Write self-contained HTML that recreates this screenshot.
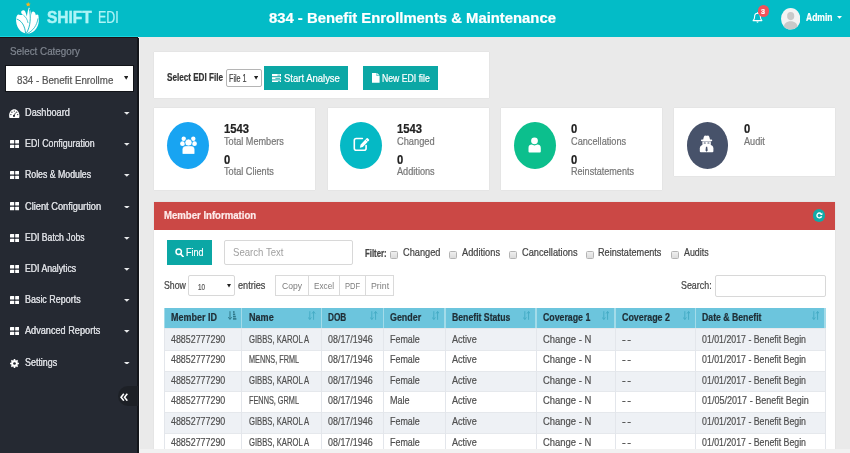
<!DOCTYPE html>
<html><head><meta charset="utf-8"><title>834 - Benefit Enrollments &amp; Maintenance</title>
<style>
html,body{margin:0;padding:0}
body{width:850px;height:453px;overflow:hidden;position:relative;background:#eaeaea;font-family:"Liberation Sans",sans-serif}
.a{position:absolute;box-sizing:border-box}
.t{position:absolute;white-space:nowrap;line-height:1;transform-origin:0 0;-webkit-text-stroke:0.22px;font-family:"Liberation Sans",sans-serif}
.card{position:absolute;background:#fff;box-shadow:0 0 1px rgba(0,0,0,.12)}
.circ{position:absolute;border-radius:50%}
.btn{position:absolute;background:#0ba7a5}
.th{position:absolute;top:308px;height:20px;background:#6cc5dd;border-right:1px solid #8fd3e6}
.cb{position:absolute;width:7.8px;height:8px;top:250.7px;border:1px solid #b4b4b4;border-radius:1.5px;background:linear-gradient(#efefef,#dcdcdc);box-sizing:border-box}
.dtb{position:absolute;top:275.4px;height:21px;border:1px solid #dadada;background:#fff;box-sizing:border-box}
</style></head><body>
<!-- header -->
<div class="a" style="left:0;top:0;width:850px;height:37.3px;background:#03bcc7"></div>
<div class="a" style="left:0;top:36.4px;width:138px;height:1px;background:#19d3dc"></div>
<!-- sidebar -->
<div class="a" style="left:0;top:37.4px;width:138.4px;height:416px;background:#252932"></div>
<div class="a" style="left:0;top:37.4px;width:138.4px;height:1px;background:#1b1114"></div>
<div class="a" style="left:137.4px;top:37.5px;width:1.6px;height:416px;background:#14161b"></div>
<div class="a" style="left:139px;top:37.5px;width:1.2px;height:416px;background:#f4f4f4"></div>
<!-- logo -->
<svg class="a" style="left:14px;top:1px" width="28" height="35" viewBox="0 0 28 35">
  <path d="M14.2 0.9 l0.75 1.55 1.7 0.25 -1.25 1.2 0.3 1.7 -1.5 -0.8 -1.5 0.8 0.3 -1.7 -1.25 -1.2 1.7 -0.25z" fill="#f7b21e"/>
  <path d="M2.1 17.6 A11.4 13.6 0 1 0 24.7 17 L24.3 14 C23.6 13 22.4 13.3 21.8 14.2 C21.6 12.6 21.2 12 20.6 11.2 A2.1 2.1 0 0 0 17.6 11.4 C17.2 12.4 17.3 13.6 17.5 15 C17 11.6 16.2 8.6 15 6.3 C14.1 8.6 13.3 11.6 12.9 15.4 C12.3 13.8 12 12 11.2 10.4 A2.2 2.2 0 0 0 7.2 10.6 C6.9 12 7.8 13.2 9 13.9 C7.2 14.4 5.8 13.6 4.6 13.4 C3.2 13.6 2.4 15 2.1 17.6z" fill="#fff"/>
  <path d="M2.6 18 C7.5 19.6 11 24.6 11.6 32.6" stroke="#0fb6c1" stroke-width="0.9" fill="none"/>
  <path d="M15.3 8 C17 15.5 16.8 25.6 12 32.8" stroke="#0fb6c1" stroke-width="0.9" fill="none"/>
  <path d="M24 17.4 C23 24.4 19 30 12.8 32.8" stroke="#0fb6c1" stroke-width="0.8" fill="none"/>
  <path d="M9.4 14.2 C11.6 15.6 13.4 18.4 14 22" stroke="#0fb6c1" stroke-width="0.7" fill="none"/>
</svg>
<!-- bell -->
<svg class="a" style="left:752px;top:12px" width="11" height="12" viewBox="0 0 11 12">
  <path d="M5.5 1.3 C3.4 1.3 2.6 3 2.6 4.8 C2.6 7 1.9 7.9 1.1 8.6 L9.9 8.6 C9.1 7.9 8.4 7 8.4 4.8 C8.4 3 7.6 1.3 5.5 1.3z" fill="none" stroke="#fff" stroke-width="1.1" stroke-linejoin="round"/>
  <path d="M4.4 9.6 a1.1 1.1 0 0 0 2.2 0z" fill="#fff"/>
  <rect x="5" y="0.3" width="1" height="1.2" fill="#fff"/>
</svg>
<div class="circ" style="left:757.5px;top:5px;width:11.6px;height:11.6px;background:#f0535b"></div>
<!-- avatar -->
<svg class="a" style="left:780.5px;top:8px" width="19.4" height="21.6" viewBox="0 0 20 22" preserveAspectRatio="none">
  <defs><clipPath id="av"><ellipse cx="10" cy="11" rx="10" ry="11"/></clipPath></defs>
  <ellipse cx="10" cy="11" rx="10" ry="11" fill="#f3f3f3"/>
  <g clip-path="url(#av)" fill="#c9c9c9"><ellipse cx="10" cy="8.2" rx="3.7" ry="4.2"/><path d="M2.5 22 C2.5 15.5 6 13.6 10 13.6 C14 13.6 17.5 15.5 17.5 22z"/></g>
</svg>
<svg class="a" style="left:836.5px;top:16.4px" width="5" height="3" viewBox="0 0 5 3"><path d="M0 0h5l-2.5 2.8z" fill="#fff"/></svg>
<!-- sidebar select -->
<div class="a" style="left:6px;top:65.8px;width:126.6px;height:24.8px;background:#fff;box-shadow:0 0 0 1px #121419"></div>
<svg class="a" style="left:123.8px;top:76.2px" width="4.4" height="3.8" viewBox="0 0 4.4 3.8"><path d="M0 0h4.4l-2.2 3.8z" fill="#222"/></svg>
<svg class="a" style="left:9.2px;top:108.5px" width="10.6" height="9.6" viewBox="0 0 10.6 9.6">
<path d="M0.3 8.2 C-0.6 3.6 2.3 0.3 5.3 0.3 C8.3 0.3 11.2 3.6 10.3 8.2 C10.2 8.9 9.8 9.3 9.2 9.3 H1.4 C0.8 9.3 0.4 8.9 0.3 8.2z" fill="#fff"/>
<g fill="#252932"><circle cx="5.3" cy="2.1" r="0.65"/><circle cx="2.9" cy="3.2" r="0.65"/><circle cx="7.7" cy="3.2" r="0.65"/><circle cx="1.9" cy="5.6" r="0.65"/><circle cx="8.7" cy="5.6" r="0.65"/><circle cx="5" cy="6.9" r="1.05"/></g>
<path d="M5 6.9 L6.6 3.6" stroke="#252932" stroke-width="0.8"/></svg>
<svg class="a" style="left:9.6px;top:139.9px" width="9.4" height="8.3" viewBox="0 0 9.4 8.3"><g fill="#fff"><rect x="0" y="0" width="4.2" height="3.6" rx="0.5"/><rect x="5.2" y="0" width="4.2" height="3.6" rx="0.5"/><rect x="0" y="4.7" width="4.2" height="3.6" rx="0.5"/><rect x="5.2" y="4.7" width="4.2" height="3.6" rx="0.5"/></g></svg>
<svg class="a" style="left:9.6px;top:171.1px" width="9.4" height="8.3" viewBox="0 0 9.4 8.3"><g fill="#fff"><rect x="0" y="0" width="4.2" height="3.6" rx="0.5"/><rect x="5.2" y="0" width="4.2" height="3.6" rx="0.5"/><rect x="0" y="4.7" width="4.2" height="3.6" rx="0.5"/><rect x="5.2" y="4.7" width="4.2" height="3.6" rx="0.5"/></g></svg>
<svg class="a" style="left:9.6px;top:202.3px" width="9.4" height="8.3" viewBox="0 0 9.4 8.3"><g fill="#fff"><rect x="0" y="0" width="4.2" height="3.6" rx="0.5"/><rect x="5.2" y="0" width="4.2" height="3.6" rx="0.5"/><rect x="0" y="4.7" width="4.2" height="3.6" rx="0.5"/><rect x="5.2" y="4.7" width="4.2" height="3.6" rx="0.5"/></g></svg>
<svg class="a" style="left:9.6px;top:233.5px" width="9.4" height="8.3" viewBox="0 0 9.4 8.3"><g fill="#fff"><rect x="0" y="0" width="4.2" height="3.6" rx="0.5"/><rect x="5.2" y="0" width="4.2" height="3.6" rx="0.5"/><rect x="0" y="4.7" width="4.2" height="3.6" rx="0.5"/><rect x="5.2" y="4.7" width="4.2" height="3.6" rx="0.5"/></g></svg>
<svg class="a" style="left:9.6px;top:264.7px" width="9.4" height="8.3" viewBox="0 0 9.4 8.3"><g fill="#fff"><rect x="0" y="0" width="4.2" height="3.6" rx="0.5"/><rect x="5.2" y="0" width="4.2" height="3.6" rx="0.5"/><rect x="0" y="4.7" width="4.2" height="3.6" rx="0.5"/><rect x="5.2" y="4.7" width="4.2" height="3.6" rx="0.5"/></g></svg>
<svg class="a" style="left:9.6px;top:295.9px" width="9.4" height="8.3" viewBox="0 0 9.4 8.3"><g fill="#fff"><rect x="0" y="0" width="4.2" height="3.6" rx="0.5"/><rect x="5.2" y="0" width="4.2" height="3.6" rx="0.5"/><rect x="0" y="4.7" width="4.2" height="3.6" rx="0.5"/><rect x="5.2" y="4.7" width="4.2" height="3.6" rx="0.5"/></g></svg>
<svg class="a" style="left:9.6px;top:327.1px" width="9.4" height="8.3" viewBox="0 0 9.4 8.3"><g fill="#fff"><rect x="0" y="0" width="4.2" height="3.6" rx="0.5"/><rect x="5.2" y="0" width="4.2" height="3.6" rx="0.5"/><rect x="0" y="4.7" width="4.2" height="3.6" rx="0.5"/><rect x="5.2" y="4.7" width="4.2" height="3.6" rx="0.5"/></g></svg>
<svg class="a" style="left:9.6px;top:358.9px" width="9" height="9" viewBox="0 0 9 9"><path d="M8.94 3.74 L8.94 5.26 L7.79 5.34 L7.42 6.23 L8.17 7.10 L7.10 8.17 L6.23 7.42 L5.34 7.79 L5.26 8.94 L3.74 8.94 L3.66 7.79 L2.77 7.42 L1.90 8.17 L0.83 7.10 L1.58 6.23 L1.21 5.34 L0.06 5.26 L0.06 3.74 L1.21 3.66 L1.58 2.77 L0.83 1.90 L1.90 0.83 L2.77 1.58 L3.66 1.21 L3.74 0.06 L5.26 0.06 L5.34 1.21 L6.23 1.58 L7.10 0.83 L8.17 1.90 L7.42 2.77 L7.79 3.66z" fill="#fff"/><circle cx="4.5" cy="4.5" r="1.35" fill="#252932"/></svg>
<svg class="a" style="left:124px;top:112.0px" width="5.6" height="2.8" viewBox="0 0 5.6 2.8"><path d="M0 0h5.6l-2.8 2.8z" fill="#e8e9eb"/></svg>
<svg class="a" style="left:124px;top:143.2px" width="5.6" height="2.8" viewBox="0 0 5.6 2.8"><path d="M0 0h5.6l-2.8 2.8z" fill="#e8e9eb"/></svg>
<svg class="a" style="left:124px;top:174.4px" width="5.6" height="2.8" viewBox="0 0 5.6 2.8"><path d="M0 0h5.6l-2.8 2.8z" fill="#e8e9eb"/></svg>
<svg class="a" style="left:124px;top:205.6px" width="5.6" height="2.8" viewBox="0 0 5.6 2.8"><path d="M0 0h5.6l-2.8 2.8z" fill="#e8e9eb"/></svg>
<svg class="a" style="left:124px;top:236.8px" width="5.6" height="2.8" viewBox="0 0 5.6 2.8"><path d="M0 0h5.6l-2.8 2.8z" fill="#e8e9eb"/></svg>
<svg class="a" style="left:124px;top:268.0px" width="5.6" height="2.8" viewBox="0 0 5.6 2.8"><path d="M0 0h5.6l-2.8 2.8z" fill="#e8e9eb"/></svg>
<svg class="a" style="left:124px;top:299.2px" width="5.6" height="2.8" viewBox="0 0 5.6 2.8"><path d="M0 0h5.6l-2.8 2.8z" fill="#e8e9eb"/></svg>
<svg class="a" style="left:124px;top:330.4px" width="5.6" height="2.8" viewBox="0 0 5.6 2.8"><path d="M0 0h5.6l-2.8 2.8z" fill="#e8e9eb"/></svg>
<svg class="a" style="left:124px;top:361.6px" width="5.6" height="2.8" viewBox="0 0 5.6 2.8"><path d="M0 0h5.6l-2.8 2.8z" fill="#e8e9eb"/></svg>
<!-- collapse tab -->
<div class="a" style="left:117.7px;top:386px;width:20px;height:20.4px;background:#1d2026;border-radius:10px 0 0 10px"></div>
<svg class="a" style="left:120.2px;top:392.7px" width="8.2" height="8.4" viewBox="0 0 9.4 9.6"><path d="M4.4 0.8 L1.2 4.8 L4.4 8.8 M8.4 0.8 L5.2 4.8 L8.4 8.8" stroke="#fff" stroke-width="1.8" fill="none"/></svg>

<!-- toolbar panel -->
<div class="card" style="left:154px;top:52px;width:335.4px;height:45.5px"></div>
<div class="a" style="left:225.8px;top:69.4px;width:36px;height:18px;background:#fff;border:1px solid #b5b5b5;border-radius:2px"></div>
<svg class="a" style="left:253.6px;top:76.4px" width="4.2" height="3.8" viewBox="0 0 4.2 3.8"><path d="M0 0h4.2l-2.1 3.8z" fill="#222"/></svg>
<div class="btn" style="left:264.4px;top:66.2px;width:83.6px;height:23.7px"></div>
<div class="btn" style="left:363.4px;top:66.2px;width:74.6px;height:23.7px"></div>
<svg class="a" style="left:272px;top:73.6px" width="9.2" height="8.6" viewBox="0 0 9.2 8.6"><g fill="#fff"><rect x="0" y="0" width="9.2" height="2.2"/><rect x="0" y="3.2" width="9.2" height="2.2"/><rect x="0" y="6.4" width="9.2" height="2.2"/></g><g fill="#0ba7a5"><rect x="5.4" y="0.7" width="2.6" height="0.8"/><rect x="3.4" y="3.9" width="4.6" height="0.8"/><rect x="6" y="7.1" width="2" height="0.8"/></g></svg>
<svg class="a" style="left:372px;top:72.8px" width="7.6" height="9.8" viewBox="0 0 7.6 9.8"><path d="M0 0H4.6V3H7.6V9.8H0z M5.2 0 L7.6 2.4 H5.2z" fill="#fff"/></svg>

<!-- cards -->
<div class="card" style="left:154px;top:108px;width:161px;height:82.3px"></div>
<div class="card" style="left:328px;top:108px;width:161px;height:82.3px"></div>
<div class="card" style="left:501px;top:108px;width:161px;height:82.3px"></div>
<div class="card" style="left:674px;top:108px;width:161px;height:68.4px"></div>
<div class="circ" style="left:167px;top:122.2px;width:42px;height:47px;background:#18a4f2"></div>
<div class="circ" style="left:340.3px;top:122.2px;width:41.8px;height:47px;background:#05b9c5"></div>
<div class="circ" style="left:514px;top:122.2px;width:41.8px;height:47px;background:#0cbf8d"></div>
<div class="circ" style="left:686.8px;top:121.8px;width:41.6px;height:47px;background:#47526a"></div>
<svg class="a" style="left:179.6px;top:135.6px" width="17" height="18.4" viewBox="0 0 17 18.4">
<g fill="#fff"><circle cx="3.7" cy="2.8" r="2.2"/><circle cx="13.3" cy="2.8" r="2.2"/><circle cx="2.5" cy="7.7" r="2.4"/><circle cx="14.5" cy="7.7" r="2.4"/>
<circle cx="8.5" cy="6.6" r="3.6" stroke="#18a4f2" stroke-width="0.7"/>
<path d="M2.3 17.2 V13.4 C2.3 11 4 9.9 5.8 9.9 H11.2 C13 9.9 14.7 11 14.7 13.4 V17.2 Q14.7 18.2 13.7 18.2 H3.3 Q2.3 18.2 2.3 17.2z" stroke="#18a4f2" stroke-width="0.4"/></g></svg>
<svg class="a" style="left:352.6px;top:137px" width="17" height="15" viewBox="0 0 17 15">
<path d="M9.4 1.5 H3.2 C1.9 1.5 1.3 2.3 1.3 3.4 V11.2 C1.3 12.5 2 13.2 3.2 13.2 H11.2 C12.4 13.2 13.1 12.5 13.1 11.2 V8.6" stroke="#fff" stroke-width="1.6" fill="none" stroke-linecap="round"/>
<path d="M6.9 10.8 L7.5 7.8 L13.6 1.2 Q14.2 0.7 14.8 1.2 L16 2.4 Q16.5 3 16 3.6 L9.8 10.1z" fill="#fff"/><path d="M12.6 2.6 L14.6 4.6" stroke="#05b9c5" stroke-width="0.6"/></svg>
<svg class="a" style="left:527.8px;top:137px" width="13.4" height="15.8" viewBox="0 0 13.4 15.8">
<g fill="#fff"><circle cx="6.5" cy="3.8" r="3.4"/><path d="M0.5 14.4 V11 C0.5 8.6 2 7.6 3.6 7.6 L6.5 8.6 L9.5 7.6 C11.2 7.6 12.8 8.6 12.8 11 V14.4 Q12.8 15.4 11.8 15.4 H1.5 Q0.5 15.4 0.5 14.4z"/></g></svg>
<svg class="a" style="left:699px;top:135.3px" width="15.2" height="17.6" viewBox="0 0 15.2 17.6">
<g fill="#fff"><path d="M4.2 5 C4.4 2.2 5.2 0.4 6.3 0.4 C6.8 0.4 7.2 0.8 7.6 0.8 C8 0.8 8.4 0.4 8.9 0.4 C10 0.4 10.8 2.2 11 5z"/>
<rect x="2" y="4.5" width="11.2" height="1.7" rx="0.8"/>
<path d="M3.4 6.6 H11.8 V9.4 C11.8 10.4 11.2 11 10.4 11 H4.8 C4 11 3.4 10.4 3.4 9.4z"/>
<path d="M0.8 16.3 V13.4 C0.8 11 2.6 9.8 4.6 9.8 H10.6 C12.6 9.8 14.4 11 14.4 13.4 V16.3 Q14.4 17.3 13.4 17.3 H1.8 Q0.8 17.3 0.8 16.3z"/></g>
<g fill="#47526a"><rect x="4.7" y="7.5" width="2.1" height="1" rx="0.5"/><rect x="8.4" y="7.5" width="2.1" height="1" rx="0.5"/><path d="M7 11.8 H8.2 L8.7 15.6 L7.6 16.8 L6.5 15.6z"/></g></svg>

<!-- member panel -->
<div class="card" style="left:154px;top:201.5px;width:681px;height:252px"></div>
<div class="a" style="left:154px;top:201.5px;width:681px;height:28.2px;background:#cb4845"></div>
<div class="circ" style="left:812.8px;top:209.4px;width:12.6px;height:12.6px;background:#12aaa6"></div>
<svg class="a" style="left:815.6px;top:212.2px" width="7" height="7" viewBox="0 0 7 7"><path d="M5.6 4.3 A2.4 2.4 0 1 1 5.2 1.9" stroke="#fff" stroke-width="1.4" fill="none"/><path d="M6.4 0.6 V3 H4z" fill="#fff"/></svg>
<div class="btn" style="left:167.2px;top:240.4px;width:44.7px;height:24.2px"></div>
<svg class="a" style="left:175px;top:247.8px" width="9" height="9.6" viewBox="0 0 9 9.6"><circle cx="3.7" cy="3.8" r="2.7" stroke="#fff" stroke-width="1.5" fill="none"/><path d="M5.7 6 L8.2 8.8" stroke="#fff" stroke-width="1.7" stroke-linecap="round"/></svg>
<div class="a" style="left:224.3px;top:240.3px;width:128.4px;height:24.3px;background:#fff;border:1px solid #d8d8d8;border-radius:2px"></div>
<div class="cb" style="left:390px"></div><div class="cb" style="left:449.2px"></div><div class="cb" style="left:509px"></div><div class="cb" style="left:586.2px"></div><div class="cb" style="left:671.4px"></div>
<div class="a" style="left:188px;top:275.4px;width:47px;height:21px;background:#fff;border:1px solid #d8d8d8;border-radius:2px"></div>
<svg class="a" style="left:227.4px;top:284.2px" width="4" height="3.6" viewBox="0 0 4 3.6"><path d="M0 0h4l-2 3.6z" fill="#222"/></svg>
<div class="dtb" style="left:275px;width:33.6px"></div><div class="dtb" style="left:307.8px;width:32px"></div><div class="dtb" style="left:339px;width:27px"></div><div class="dtb" style="left:365.2px;width:29.2px"></div>
<div class="a" style="left:715.4px;top:275.2px;width:110.4px;height:21.4px;background:#fff;border:1px solid #d8d8d8;border-radius:2px"></div>
<div class="a" style="left:164.4px;top:308px;width:660.6px;height:20px;background:#6cc5dd"></div>
<div class="a" style="left:164.4px;top:328px;width:660.6px;height:22.2px;background:#eef1f5;border-top:1px solid #e5e8ec"></div>
<div class="a" style="left:164.4px;top:350.2px;width:660.6px;height:20.6px;background:#ffffff;border-top:1px solid #e5e8ec"></div>
<div class="a" style="left:164.4px;top:370.8px;width:660.6px;height:20.6px;background:#eef1f5;border-top:1px solid #e5e8ec"></div>
<div class="a" style="left:164.4px;top:391.4px;width:660.6px;height:20.6px;background:#ffffff;border-top:1px solid #e5e8ec"></div>
<div class="a" style="left:164.4px;top:412.0px;width:660.6px;height:20.7px;background:#eef1f5;border-top:1px solid #e5e8ec"></div>
<div class="a" style="left:164.4px;top:432.7px;width:660.6px;height:20.6px;background:#ffffff;border-top:1px solid #e5e8ec"></div>
<div class="a" style="left:163.7px;top:308px;width:1.4px;height:20px;background:#a3dbe9"></div>
<div class="a" style="left:163.9px;top:328px;width:1px;height:125px;background:#e3e6eb"></div>
<div class="a" style="left:241.0px;top:308px;width:1.4px;height:20px;background:#a3dbe9"></div>
<div class="a" style="left:241.2px;top:328px;width:1px;height:125px;background:#e3e6eb"></div>
<div class="a" style="left:320.7px;top:308px;width:1.4px;height:20px;background:#a3dbe9"></div>
<div class="a" style="left:320.9px;top:328px;width:1px;height:125px;background:#e3e6eb"></div>
<div class="a" style="left:382.6px;top:308px;width:1.4px;height:20px;background:#a3dbe9"></div>
<div class="a" style="left:382.8px;top:328px;width:1px;height:125px;background:#e3e6eb"></div>
<div class="a" style="left:444.3px;top:308px;width:1.4px;height:20px;background:#a3dbe9"></div>
<div class="a" style="left:444.5px;top:328px;width:1px;height:125px;background:#e3e6eb"></div>
<div class="a" style="left:535.3px;top:308px;width:1.4px;height:20px;background:#a3dbe9"></div>
<div class="a" style="left:535.5px;top:328px;width:1px;height:125px;background:#e3e6eb"></div>
<div class="a" style="left:614.3px;top:308px;width:1.4px;height:20px;background:#a3dbe9"></div>
<div class="a" style="left:614.5px;top:328px;width:1px;height:125px;background:#e3e6eb"></div>
<div class="a" style="left:694.9px;top:308px;width:1.4px;height:20px;background:#a3dbe9"></div>
<div class="a" style="left:695.1px;top:328px;width:1px;height:125px;background:#e3e6eb"></div>
<div class="a" style="left:824.3px;top:308px;width:1.4px;height:20px;background:#a3dbe9"></div>
<div class="a" style="left:824.5px;top:328px;width:1px;height:125px;background:#e3e6eb"></div>
<svg class="a" style="left:228.3px;top:311.4px" width="8.4" height="8.8" viewBox="0 0 8.4 8.8"><path d="M2 0.2 V8.2 M0.3 6.2 L2 8.4 L3.7 6.2" stroke="#2f7788" stroke-width="1" fill="none"/><g fill="#2f7788"><rect x="5" y="0.2" width="1.6" height="1.6"/><rect x="5" y="2.5" width="2.2" height="1.6"/><rect x="5" y="4.8" width="2.8" height="1.6"/><rect x="5" y="7.1" width="3.4" height="1.6"/></g></svg>
<svg class="a" style="left:308.4px;top:311.4px" width="7.4" height="9" viewBox="0 0 7.4 9"><path d="M1.8 0.2 V8.2 M0.2 6.4 L1.8 8.6 L3.4 6.4 M5.6 8.8 V0.8 M4 2.6 L5.6 0.4 L7.2 2.6" stroke="#45adc6" stroke-width="1" fill="none"/></svg>
<svg class="a" style="left:370.3px;top:311.4px" width="7.4" height="9" viewBox="0 0 7.4 9"><path d="M1.8 0.2 V8.2 M0.2 6.4 L1.8 8.6 L3.4 6.4 M5.6 8.8 V0.8 M4 2.6 L5.6 0.4 L7.2 2.6" stroke="#45adc6" stroke-width="1" fill="none"/></svg>
<svg class="a" style="left:432.0px;top:311.4px" width="7.4" height="9" viewBox="0 0 7.4 9"><path d="M1.8 0.2 V8.2 M0.2 6.4 L1.8 8.6 L3.4 6.4 M5.6 8.8 V0.8 M4 2.6 L5.6 0.4 L7.2 2.6" stroke="#45adc6" stroke-width="1" fill="none"/></svg>
<svg class="a" style="left:523.0px;top:311.4px" width="7.4" height="9" viewBox="0 0 7.4 9"><path d="M1.8 0.2 V8.2 M0.2 6.4 L1.8 8.6 L3.4 6.4 M5.6 8.8 V0.8 M4 2.6 L5.6 0.4 L7.2 2.6" stroke="#45adc6" stroke-width="1" fill="none"/></svg>
<svg class="a" style="left:602.0px;top:311.4px" width="7.4" height="9" viewBox="0 0 7.4 9"><path d="M1.8 0.2 V8.2 M0.2 6.4 L1.8 8.6 L3.4 6.4 M5.6 8.8 V0.8 M4 2.6 L5.6 0.4 L7.2 2.6" stroke="#45adc6" stroke-width="1" fill="none"/></svg>
<svg class="a" style="left:682.6px;top:311.4px" width="7.4" height="9" viewBox="0 0 7.4 9"><path d="M1.8 0.2 V8.2 M0.2 6.4 L1.8 8.6 L3.4 6.4 M5.6 8.8 V0.8 M4 2.6 L5.6 0.4 L7.2 2.6" stroke="#45adc6" stroke-width="1" fill="none"/></svg>
<svg class="a" style="left:812.0px;top:311.4px" width="7.4" height="9" viewBox="0 0 7.4 9"><path d="M1.8 0.2 V8.2 M0.2 6.4 L1.8 8.6 L3.4 6.4 M5.6 8.8 V0.8 M4 2.6 L5.6 0.4 L7.2 2.6" stroke="#45adc6" stroke-width="1" fill="none"/></svg>
<!-- bottom strip -->
<div class="a" style="left:140.2px;top:449px;width:710px;height:4px;background:#f1f1f1"></div>
<div style="position:absolute;left:0;top:0;width:850px;height:453px;will-change:transform">
<span id="t0" class="t" style="left:47.2px;top:8.50px;font-size:16.5px;font-weight:700;color:#aef4f6;transform:scaleX(0.9377);-webkit-text-stroke:0.5px #aef4f6;">SHIFT</span>
<span id="t1" class="t" style="left:97.7px;top:8.50px;font-size:16.5px;font-weight:400;color:#aef4f6;transform:scaleX(0.7523);">EDI</span>
<span id="t2" class="t" style="left:268.8px;top:10.60px;font-size:14.7px;font-weight:700;color:#ffffff;transform:scaleX(1.0101);">834 - Benefit Enrollments &amp; Maintenance</span>
<span id="t3" class="t" style="left:806.0px;top:11.70px;font-size:10.5px;font-weight:700;color:#ffffff;transform:scaleX(0.8111);">Admin</span>
<span id="t4" class="t" style="left:761.3px;top:7.60px;font-size:8px;font-weight:700;color:#ffffff;transform:scaleX(0.8982);">3</span>
<span id="t5" class="t" style="left:9.5px;top:45.80px;font-size:11px;font-weight:400;color:#7f858f;transform:scaleX(0.8931);">Select Category</span>
<span id="t6" class="t" style="left:16.9px;top:74.70px;font-size:10.5px;font-weight:400;color:#555;transform:scaleX(0.9269);">834 - Benefit Enrollme</span>
<span id="t7" class="t" style="left:25.2px;top:107.00px;font-size:11px;font-weight:400;color:#d6d8dd;transform:scaleX(0.8341);text-shadow:0 0 0.3px #d6d8dd;">Dashboard</span>
<span id="t8" class="t" style="left:25.2px;top:138.20px;font-size:11px;font-weight:400;color:#d6d8dd;transform:scaleX(0.8027);text-shadow:0 0 0.3px #d6d8dd;">EDI Configuration</span>
<span id="t9" class="t" style="left:25.2px;top:169.40px;font-size:11px;font-weight:400;color:#d6d8dd;transform:scaleX(0.7949);text-shadow:0 0 0.3px #d6d8dd;">Roles &amp; Modules</span>
<span id="t10" class="t" style="left:25.2px;top:200.60px;font-size:11px;font-weight:400;color:#d6d8dd;transform:scaleX(0.8409);text-shadow:0 0 0.3px #d6d8dd;">Client Configurtion</span>
<span id="t11" class="t" style="left:25.2px;top:231.80px;font-size:11px;font-weight:400;color:#d6d8dd;transform:scaleX(0.7860);text-shadow:0 0 0.3px #d6d8dd;">EDI Batch Jobs</span>
<span id="t12" class="t" style="left:25.2px;top:263.00px;font-size:11px;font-weight:400;color:#d6d8dd;transform:scaleX(0.7884);text-shadow:0 0 0.3px #d6d8dd;">EDI Analytics</span>
<span id="t13" class="t" style="left:25.2px;top:294.20px;font-size:11px;font-weight:400;color:#d6d8dd;transform:scaleX(0.8119);text-shadow:0 0 0.3px #d6d8dd;">Basic Reports</span>
<span id="t14" class="t" style="left:25.2px;top:325.40px;font-size:11px;font-weight:400;color:#d6d8dd;transform:scaleX(0.8320);text-shadow:0 0 0.3px #d6d8dd;">Advanced Reports</span>
<span id="t15" class="t" style="left:25.2px;top:356.60px;font-size:11px;font-weight:400;color:#d6d8dd;transform:scaleX(0.8101);text-shadow:0 0 0.3px #d6d8dd;">Settings</span>
<span id="t16" class="t" style="left:167.0px;top:72.00px;font-size:10.5px;font-weight:700;color:#333;transform:scaleX(0.7737);">Select EDI File</span>
<span id="t17" class="t" style="left:228.8px;top:72.50px;font-size:10.5px;font-weight:400;color:#444;transform:scaleX(0.6852);">File 1</span>
<span id="t18" class="t" style="left:284.0px;top:72.60px;font-size:11px;font-weight:400;color:#fff;transform:scaleX(0.8623);">Start Analyse</span>
<span id="t19" class="t" style="left:382.3px;top:72.60px;font-size:11px;font-weight:400;color:#fff;transform:scaleX(0.7897);">New EDI file</span>
<span id="t20" class="t" style="left:224.2px;top:122.40px;font-size:13.5px;font-weight:700;color:#222;transform:scaleX(0.8320);">1543</span>
<span id="t21" class="t" style="left:224.2px;top:135.60px;font-size:10.5px;font-weight:400;color:#777;transform:scaleX(0.8684);">Total Members</span>
<span id="t22" class="t" style="left:224.2px;top:152.80px;font-size:13.5px;font-weight:700;color:#222;transform:scaleX(0.8316);">0</span>
<span id="t23" class="t" style="left:224.2px;top:165.70px;font-size:10.5px;font-weight:400;color:#777;transform:scaleX(0.8706);">Total Clients</span>
<span id="t24" class="t" style="left:397.3px;top:122.40px;font-size:13.5px;font-weight:700;color:#222;transform:scaleX(0.8320);">1543</span>
<span id="t25" class="t" style="left:397.3px;top:135.60px;font-size:10.5px;font-weight:400;color:#777;transform:scaleX(0.8845);">Changed</span>
<span id="t26" class="t" style="left:397.3px;top:152.80px;font-size:13.5px;font-weight:700;color:#222;transform:scaleX(0.8316);">0</span>
<span id="t27" class="t" style="left:397.3px;top:165.70px;font-size:10.5px;font-weight:400;color:#777;transform:scaleX(0.8726);">Additions</span>
<span id="t28" class="t" style="left:570.7px;top:122.40px;font-size:13.5px;font-weight:700;color:#222;transform:scaleX(0.8316);">0</span>
<span id="t29" class="t" style="left:570.7px;top:135.60px;font-size:10.5px;font-weight:400;color:#777;transform:scaleX(0.8755);">Cancellations</span>
<span id="t30" class="t" style="left:570.7px;top:152.80px;font-size:13.5px;font-weight:700;color:#222;transform:scaleX(0.8316);">0</span>
<span id="t31" class="t" style="left:570.7px;top:165.70px;font-size:10.5px;font-weight:400;color:#777;transform:scaleX(0.8636);">Reinstatements</span>
<span id="t32" class="t" style="left:743.8px;top:122.40px;font-size:13.5px;font-weight:700;color:#222;transform:scaleX(0.8316);">0</span>
<span id="t33" class="t" style="left:743.8px;top:135.60px;font-size:10.5px;font-weight:400;color:#777;transform:scaleX(0.8689);">Audit</span>
<span id="t34" class="t" style="left:163.8px;top:211.30px;font-size:10.3px;font-weight:700;color:#fdeceb;transform:scaleX(0.9304);">Member Information</span>
<span id="t35" class="t" style="left:186.2px;top:247.10px;font-size:11.5px;font-weight:400;color:#fff;transform:scaleX(0.7866);">Find</span>
<span id="t36" class="t" style="left:232.8px;top:247.10px;font-size:11px;font-weight:400;color:#a0a0a0;transform:scaleX(0.8723);-webkit-text-stroke:0;">Search Text</span>
<span id="t37" class="t" style="left:365.2px;top:248.80px;font-size:10px;font-weight:700;color:#444;transform:scaleX(0.7775);">Filter:</span>
<span id="t38" class="t" style="left:402.6px;top:247.20px;font-size:10.5px;font-weight:400;color:#444;transform:scaleX(0.8798);">Changed</span>
<span id="t39" class="t" style="left:462.0px;top:247.20px;font-size:10.5px;font-weight:400;color:#444;transform:scaleX(0.8796);">Additions</span>
<span id="t40" class="t" style="left:521.5px;top:247.20px;font-size:10.5px;font-weight:400;color:#444;transform:scaleX(0.8819);">Cancellations</span>
<span id="t41" class="t" style="left:598.3px;top:247.20px;font-size:10.5px;font-weight:400;color:#444;transform:scaleX(0.8691);">Reinstatements</span>
<span id="t42" class="t" style="left:683.7px;top:247.20px;font-size:10.5px;font-weight:400;color:#444;transform:scaleX(0.8428);">Audits</span>
<span id="t43" class="t" style="left:163.8px;top:280.20px;font-size:10.5px;font-weight:400;color:#444;transform:scaleX(0.8338);">Show</span>
<span id="t44" class="t" style="left:197.5px;top:282.80px;font-size:9px;font-weight:400;color:#555;transform:scaleX(0.6989);">10</span>
<span id="t45" class="t" style="left:237.9px;top:280.20px;font-size:10.5px;font-weight:400;color:#444;transform:scaleX(0.8694);">entries</span>
<span id="t46" class="t" style="left:281.5px;top:282.00px;font-size:9.3px;font-weight:400;color:#7d7d7d;transform:scaleX(0.9209);-webkit-text-stroke:0;">Copy</span>
<span id="t47" class="t" style="left:313.5px;top:282.00px;font-size:9.3px;font-weight:400;color:#7d7d7d;transform:scaleX(0.8797);-webkit-text-stroke:0;">Excel</span>
<span id="t48" class="t" style="left:344.5px;top:282.00px;font-size:9.3px;font-weight:400;color:#7d7d7d;transform:scaleX(0.8168);-webkit-text-stroke:0;">PDF</span>
<span id="t49" class="t" style="left:370.7px;top:282.00px;font-size:9.3px;font-weight:400;color:#7d7d7d;transform:scaleX(0.9464);-webkit-text-stroke:0;">Print</span>
<span id="t50" class="t" style="left:681.1px;top:280.30px;font-size:10.5px;font-weight:400;color:#444;transform:scaleX(0.8456);">Search:</span>
<span id="t51" class="t" style="left:171.0px;top:312.60px;font-size:10.2px;font-weight:700;color:#1f2d35;transform:scaleX(0.8811);">Member ID</span>
<span id="t52" class="t" style="left:248.6px;top:312.60px;font-size:10.2px;font-weight:700;color:#1f2d35;transform:scaleX(0.8901);">Name</span>
<span id="t53" class="t" style="left:327.7px;top:312.60px;font-size:10.2px;font-weight:700;color:#1f2d35;transform:scaleX(0.8083);">DOB</span>
<span id="t54" class="t" style="left:390.1px;top:312.60px;font-size:10.2px;font-weight:700;color:#1f2d35;transform:scaleX(0.8718);">Gender</span>
<span id="t55" class="t" style="left:451.6px;top:312.60px;font-size:10.2px;font-weight:700;color:#1f2d35;transform:scaleX(0.8526);">Benefit Status</span>
<span id="t56" class="t" style="left:542.8px;top:312.60px;font-size:10.2px;font-weight:700;color:#1f2d35;transform:scaleX(0.8610);">Coverage 1</span>
<span id="t57" class="t" style="left:622.0px;top:312.60px;font-size:10.2px;font-weight:700;color:#1f2d35;transform:scaleX(0.8737);">Coverage 2</span>
<span id="t58" class="t" style="left:702.0px;top:312.60px;font-size:10.2px;font-weight:700;color:#1f2d35;transform:scaleX(0.8544);">Date &amp; Benefit</span>
<span id="t59" class="t" style="left:170.9px;top:333.50px;font-size:11.2px;font-weight:400;color:#505050;transform:scaleX(0.7932);">48852777290</span>
<span id="t60" class="t" style="left:248.6px;top:334.50px;font-size:10.3px;font-weight:400;color:#505050;transform:scaleX(0.7442);">GIBBS, KAROL A</span>
<span id="t61" class="t" style="left:327.7px;top:333.50px;font-size:11.2px;font-weight:400;color:#505050;transform:scaleX(0.7964);">08/17/1946</span>
<span id="t62" class="t" style="left:390.1px;top:333.50px;font-size:11.2px;font-weight:400;color:#505050;transform:scaleX(0.7987);">Female</span>
<span id="t63" class="t" style="left:451.6px;top:333.50px;font-size:11.2px;font-weight:400;color:#505050;transform:scaleX(0.8107);">Active</span>
<span id="t64" class="t" style="left:542.8px;top:333.50px;font-size:11.2px;font-weight:400;color:#505050;transform:scaleX(0.8441);">Change - N</span>
<span id="t65" class="t" style="left:622.0px;top:333.50px;font-size:11.2px;font-weight:400;color:#505050;transform:scaleX(1.0045);letter-spacing:1.5px;">--</span>
<span id="t66" class="t" style="left:702.0px;top:333.50px;font-size:11.2px;font-weight:400;color:#505050;transform:scaleX(0.7849);">01/01/2017 - Benefit Begin</span>
<span id="t67" class="t" style="left:170.9px;top:354.16px;font-size:11.2px;font-weight:400;color:#505050;transform:scaleX(0.7932);">48852777290</span>
<span id="t68" class="t" style="left:248.6px;top:355.16px;font-size:10.3px;font-weight:400;color:#505050;transform:scaleX(0.7048);">MENNS, FRML</span>
<span id="t69" class="t" style="left:327.7px;top:354.16px;font-size:11.2px;font-weight:400;color:#505050;transform:scaleX(0.7964);">08/17/1946</span>
<span id="t70" class="t" style="left:390.1px;top:354.16px;font-size:11.2px;font-weight:400;color:#505050;transform:scaleX(0.7987);">Female</span>
<span id="t71" class="t" style="left:451.6px;top:354.16px;font-size:11.2px;font-weight:400;color:#505050;transform:scaleX(0.8107);">Active</span>
<span id="t72" class="t" style="left:542.8px;top:354.16px;font-size:11.2px;font-weight:400;color:#505050;transform:scaleX(0.8441);">Change - N</span>
<span id="t73" class="t" style="left:622.0px;top:354.16px;font-size:11.2px;font-weight:400;color:#505050;transform:scaleX(1.0045);letter-spacing:1.5px;">--</span>
<span id="t74" class="t" style="left:702.0px;top:354.16px;font-size:11.2px;font-weight:400;color:#505050;transform:scaleX(0.7849);">01/01/2017 - Benefit Begin</span>
<span id="t75" class="t" style="left:170.9px;top:374.82px;font-size:11.2px;font-weight:400;color:#505050;transform:scaleX(0.7932);">48852777290</span>
<span id="t76" class="t" style="left:248.6px;top:375.82px;font-size:10.3px;font-weight:400;color:#505050;transform:scaleX(0.7442);">GIBBS, KAROL A</span>
<span id="t77" class="t" style="left:327.7px;top:374.82px;font-size:11.2px;font-weight:400;color:#505050;transform:scaleX(0.7964);">08/17/1946</span>
<span id="t78" class="t" style="left:390.1px;top:374.82px;font-size:11.2px;font-weight:400;color:#505050;transform:scaleX(0.7987);">Female</span>
<span id="t79" class="t" style="left:451.6px;top:374.82px;font-size:11.2px;font-weight:400;color:#505050;transform:scaleX(0.8107);">Active</span>
<span id="t80" class="t" style="left:542.8px;top:374.82px;font-size:11.2px;font-weight:400;color:#505050;transform:scaleX(0.8441);">Change - N</span>
<span id="t81" class="t" style="left:622.0px;top:374.82px;font-size:11.2px;font-weight:400;color:#505050;transform:scaleX(1.0045);letter-spacing:1.5px;">--</span>
<span id="t82" class="t" style="left:702.0px;top:374.82px;font-size:11.2px;font-weight:400;color:#505050;transform:scaleX(0.7849);">01/01/2017 - Benefit Begin</span>
<span id="t83" class="t" style="left:170.9px;top:395.48px;font-size:11.2px;font-weight:400;color:#505050;transform:scaleX(0.7932);">48852777290</span>
<span id="t84" class="t" style="left:248.6px;top:396.48px;font-size:10.3px;font-weight:400;color:#505050;transform:scaleX(0.7105);">FENNS, GRML</span>
<span id="t85" class="t" style="left:327.7px;top:395.48px;font-size:11.2px;font-weight:400;color:#505050;transform:scaleX(0.7964);">08/17/1946</span>
<span id="t86" class="t" style="left:390.1px;top:395.48px;font-size:11.2px;font-weight:400;color:#505050;transform:scaleX(0.8082);">Male</span>
<span id="t87" class="t" style="left:451.6px;top:395.48px;font-size:11.2px;font-weight:400;color:#505050;transform:scaleX(0.8107);">Active</span>
<span id="t88" class="t" style="left:542.8px;top:395.48px;font-size:11.2px;font-weight:400;color:#505050;transform:scaleX(0.8441);">Change - N</span>
<span id="t89" class="t" style="left:622.0px;top:395.48px;font-size:11.2px;font-weight:400;color:#505050;transform:scaleX(1.0045);letter-spacing:1.5px;">--</span>
<span id="t90" class="t" style="left:702.0px;top:395.48px;font-size:11.2px;font-weight:400;color:#505050;transform:scaleX(0.8060);">01/05/2017 - Benefit Begin</span>
<span id="t91" class="t" style="left:170.9px;top:416.14px;font-size:11.2px;font-weight:400;color:#505050;transform:scaleX(0.7932);">48852777290</span>
<span id="t92" class="t" style="left:248.6px;top:417.14px;font-size:10.3px;font-weight:400;color:#505050;transform:scaleX(0.7442);">GIBBS, KAROL A</span>
<span id="t93" class="t" style="left:327.7px;top:416.14px;font-size:11.2px;font-weight:400;color:#505050;transform:scaleX(0.7964);">08/17/1946</span>
<span id="t94" class="t" style="left:390.1px;top:416.14px;font-size:11.2px;font-weight:400;color:#505050;transform:scaleX(0.7987);">Female</span>
<span id="t95" class="t" style="left:451.6px;top:416.14px;font-size:11.2px;font-weight:400;color:#505050;transform:scaleX(0.8107);">Active</span>
<span id="t96" class="t" style="left:542.8px;top:416.14px;font-size:11.2px;font-weight:400;color:#505050;transform:scaleX(0.8441);">Change - N</span>
<span id="t97" class="t" style="left:622.0px;top:416.14px;font-size:11.2px;font-weight:400;color:#505050;transform:scaleX(1.0045);letter-spacing:1.5px;">--</span>
<span id="t98" class="t" style="left:702.0px;top:416.14px;font-size:11.2px;font-weight:400;color:#505050;transform:scaleX(0.7849);">01/01/2017 - Benefit Begin</span>
<span id="t99" class="t" style="left:170.9px;top:436.80px;font-size:11.2px;font-weight:400;color:#505050;transform:scaleX(0.7932);">48852777290</span>
<span id="t100" class="t" style="left:248.6px;top:437.80px;font-size:10.3px;font-weight:400;color:#505050;transform:scaleX(0.7442);">GIBBS, KAROL A</span>
<span id="t101" class="t" style="left:327.7px;top:436.80px;font-size:11.2px;font-weight:400;color:#505050;transform:scaleX(0.7964);">08/17/1946</span>
<span id="t102" class="t" style="left:390.1px;top:436.80px;font-size:11.2px;font-weight:400;color:#505050;transform:scaleX(0.7987);">Female</span>
<span id="t103" class="t" style="left:451.6px;top:436.80px;font-size:11.2px;font-weight:400;color:#505050;transform:scaleX(0.8107);">Active</span>
<span id="t104" class="t" style="left:542.8px;top:436.80px;font-size:11.2px;font-weight:400;color:#505050;transform:scaleX(0.8441);">Change - N</span>
<span id="t105" class="t" style="left:622.0px;top:436.80px;font-size:11.2px;font-weight:400;color:#505050;transform:scaleX(1.0045);letter-spacing:1.5px;">--</span>
<span id="t106" class="t" style="left:702.0px;top:436.80px;font-size:11.2px;font-weight:400;color:#505050;transform:scaleX(0.7849);">01/01/2017 - Benefit Begin</span>
</div>
</body></html>
